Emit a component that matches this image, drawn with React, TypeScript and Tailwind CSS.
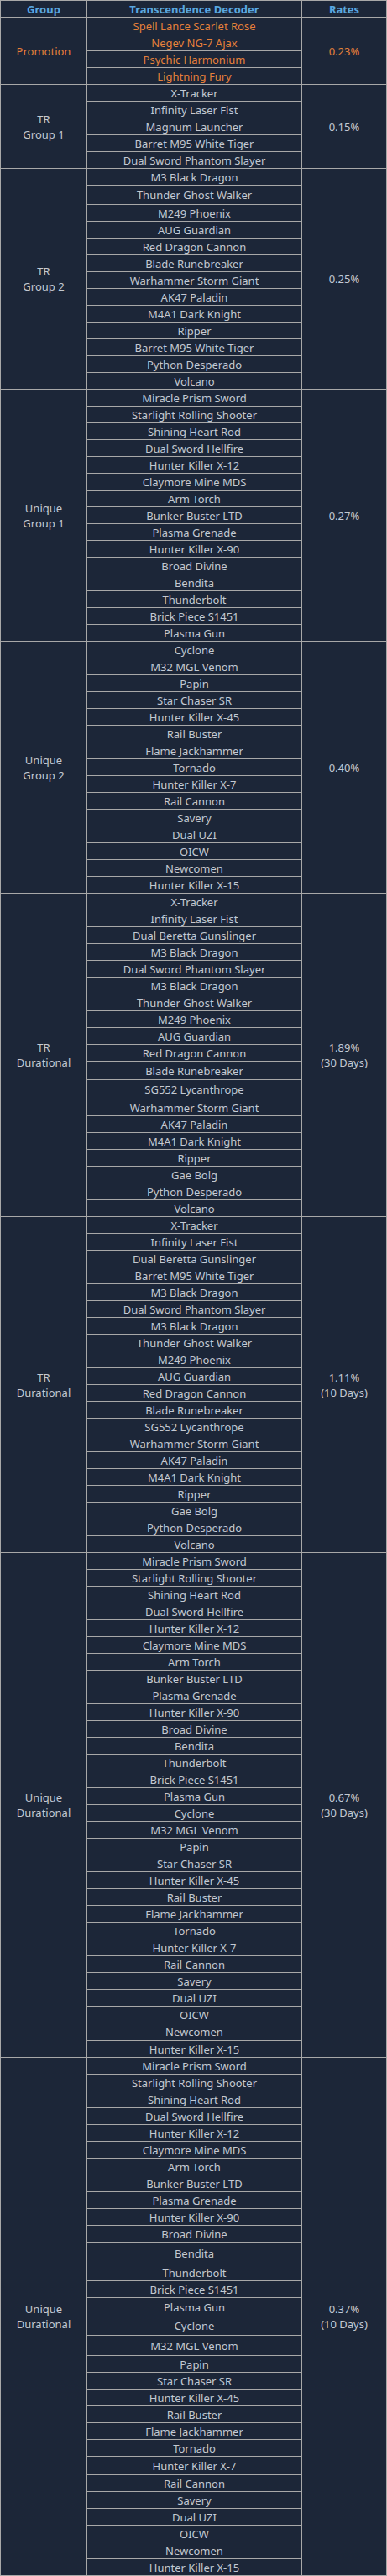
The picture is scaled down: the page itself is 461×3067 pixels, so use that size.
import React from 'react'

type Item = { name: string; h?: number }
type Group = { label: string[]; rate: string[]; items: Item[]; promo?: boolean }

const uniqueA = [
  'Miracle Prism Sword', 'Starlight Rolling Shooter', 'Shining Heart Rod', 'Dual Sword Hellfire',
  'Hunter Killer X-12', 'Claymore Mine MDS', 'Arm Torch', 'Bunker Buster LTD', 'Plasma Grenade',
  'Hunter Killer X-90', 'Broad Divine', 'Bendita', 'Thunderbolt', 'Brick Piece S1451', 'Plasma Gun',
]
const uniqueB = [
  'Cyclone', 'M32 MGL Venom', 'Papin', 'Star Chaser SR', 'Hunter Killer X-45', 'Rail Buster',
  'Flame Jackhammer', 'Tornado', 'Hunter Killer X-7', 'Rail Cannon', 'Savery', 'Dual UZI', 'OICW',
  'Newcomen', 'Hunter Killer X-15',
]
const trTail = [
  'M3 Black Dragon', 'Thunder Ghost Walker', 'M249 Phoenix', 'AUG Guardian', 'Red Dragon Cannon',
  'Blade Runebreaker', 'SG552 Lycanthrope', 'Warhammer Storm Giant', 'AK47 Paladin', 'M4A1 Dark Knight',
  'Ripper', 'Gae Bolg', 'Python Desperado', 'Volcano',
]

// extra pixel heights seen in the original rows
const tall = (list: string[], extra: Record<string, number> = {}): Item[] =>
  list.map((name) => ({ name, h: extra[name] }))

const groups: Group[] = [
  {
    label: ['Promotion'],
    rate: ['0.23%'],
    promo: true,
    items: tall(['Spell Lance Scarlet Rose', 'Negev NG-7 Ajax', 'Psychic Harmonium', 'Lightning Fury']),
  },
  {
    label: ['TR', 'Group 1'],
    rate: ['0.15%'],
    items: tall(['X-Tracker', 'Infinity Laser Fist', 'Magnum Launcher', 'Barret M95 White Tiger', 'Dual Sword Phantom Slayer']),
  },
  {
    label: ['TR', 'Group 2'],
    rate: ['0.25%'],
    items: tall(
      ['M3 Black Dragon', 'Thunder Ghost Walker', 'M249 Phoenix', 'AUG Guardian', 'Red Dragon Cannon',
        'Blade Runebreaker', 'Warhammer Storm Giant', 'AK47 Paladin', 'M4A1 Dark Knight', 'Ripper',
        'Barret M95 White Tiger', 'Python Desperado', 'Volcano'],
      { 'Thunder Ghost Walker': 23 },
    ),
  },
  { label: ['Unique', 'Group 1'], rate: ['0.27%'], items: tall(uniqueA) },
  { label: ['Unique', 'Group 2'], rate: ['0.40%'], items: tall(uniqueB) },
  {
    label: ['TR', 'Durational'],
    rate: ['1.89%', '(30 Days)'],
    items: tall(
      ['X-Tracker', 'Infinity Laser Fist', 'Dual Beretta Gunslinger', 'M3 Black Dragon', 'Dual Sword Phantom Slayer', ...trTail],
      { 'Blade Runebreaker': 22, 'SG552 Lycanthrope': 23 },
    ),
  },
  {
    label: ['TR', 'Durational'],
    rate: ['1.11%', '(10 Days)'],
    items: tall(['X-Tracker', 'Infinity Laser Fist', 'Dual Beretta Gunslinger', 'Barret M95 White Tiger', 'M3 Black Dragon', 'Dual Sword Phantom Slayer', ...trTail]),
  },
  {
    label: ['Unique', 'Durational'],
    rate: ['0.67%', '(30 Days)'],
    items: tall([...uniqueA, ...uniqueB], { Newcomen: 21 }),
  },
  {
    label: ['Unique', 'Durational'],
    rate: ['0.37%', '(10 Days)'],
    items: tall([...uniqueA, ...uniqueB], {
      Bendita: 26, 'Plasma Gun': 22, Cyclone: 23, 'M32 MGL Venom': 24, 'Hunter Killer X-7': 22,
    }),
  },
]

export default function App() {
  return (
    <div className="w-[461px] bg-[#1c2638] border-l border-t border-r border-[#a8a8a8] font-['Noto_Sans',sans-serif] text-[13px] leading-[18px] text-[#c3c9d2]">
      <div className="flex h-[20px] border-b border-[#a8a8a8] text-[#5aa8e0] font-bold">
        <div className="w-[103px] border-r border-[#a8a8a8] flex items-center justify-center">Group</div>
        <div className="w-[256px] border-r border-[#a8a8a8] flex items-center justify-center">Transcendence Decoder</div>
        <div className="flex-1 flex items-center justify-center">Rates</div>
      </div>

      {groups.map((g, gi) => (
        <div key={gi} className={`flex ${g.promo ? 'text-[#e5803a]' : ''}`}>
          <div className="w-[103px] border-r border-b border-[#a8a8a8] flex flex-col items-center justify-center text-center">
            {g.label.map((l) => (
              <span key={l}>{l}</span>
            ))}
          </div>
          <div className="w-[256px] border-r border-[#a8a8a8] flex flex-col">
            {g.items.map((it, i) => (
              <div
                key={i}
                className="border-b border-[#a8a8a8] flex items-center justify-center"
                style={{ height: it.h ?? 20 }}
              >
                {it.name}
              </div>
            ))}
          </div>
          <div className="flex-1 border-b border-[#a8a8a8] flex flex-col items-center justify-center text-center">
            {g.rate.map((r) => (
              <span key={r}>{r}</span>
            ))}
          </div>
        </div>
      ))}
    </div>
  )
}
